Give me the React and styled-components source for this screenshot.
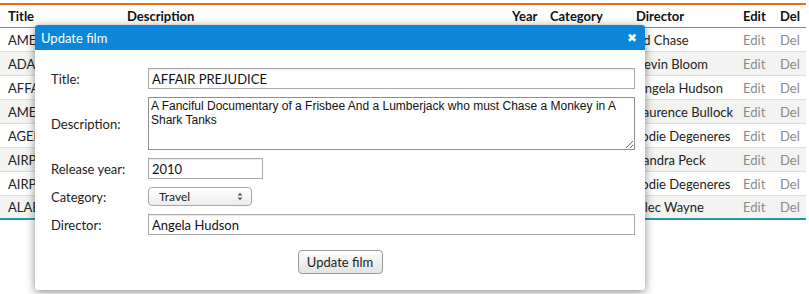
import React from "react"
import styled, { createGlobalStyle } from "styled-components"

const GlobalStyle = createGlobalStyle`
    html, body {
        margin: 0;
        padding: 0;
        background: #ffffff;
    }
    body {
        font-family: Lato, "Open Sans", sans-serif;
        font-size: 13px;
        color: #222222;
    }
    * { box-sizing: border-box; }
`

const films = [
    { title: "AMERICAN CIRCUS", description: "A Insightful Drama of a Girl And a Astronaut who must Face a Database Administrator in A Shark Tank", year: 2006, category: "Action", director: "Ed Chase" },
    { title: "ADAPTATION HOLES", description: "A Astounding Reflection of a Lumberjack And a Car who must Sink a Lumberjack in A Baloon Factory", year: 2006, category: "Documentary", director: "Kevin Bloom" },
    { title: "AFFAIR PREJUDICE", description: "A Fanciful Documentary of a Frisbee And a Lumberjack who must Chase a Monkey in A Shark Tanks", year: 2010, category: "Travel", director: "Angela Hudson" },
    { title: "AMELIE HELLFIGHTERS", description: "A Boring Drama of a Woman And a Squirrel who must Conquer a Student in A Baloon", year: 2006, category: "Music", director: "Laurence Bullock" },
    { title: "AGENT TRUMAN", description: "A Intrepid Panorama of a Robot And a Boy who must Escape a Sumo Wrestler in Ancient China", year: 2006, category: "Foreign", director: "Jodie Degeneres" },
    { title: "AIRPLANE SIERRA", description: "A Touching Saga of a Hunter And a Butler who must Discover a Butler in A Jet Boat", year: 2006, category: "Comedy", director: "Sandra Peck" },
    { title: "AIRPORT POLLOCK", description: "A Epic Tale of a Moose And a Girl who must Confront a Monkey in Ancient India", year: 2006, category: "Horror", director: "Jodie Degeneres" },
    { title: "ALABAMA DEVIL", description: "A Thoughtful Panorama of a Database Administrator And a Mad Scientist who must Outgun a Mad Scientist in A Jet Boat", year: 2006, category: "Horror", director: "Alec Wayne" },
]

const columns = [
    { label: "Title", width: 119 },
    { label: "Description", width: 385 },
    { label: "Year", width: 38 },
    { label: "Category", width: 86 },
    { label: "Director", width: 107 },
    { label: "Edit", width: 37 },
    { label: "Del", width: 34 },
]

export default function App(){
    return(
        <SCPage>
            <GlobalStyle />
            <SCTable>
                <colgroup>
                    {columns.map(c => <col key={c.label} style={{ width: c.width }} />)}
                </colgroup>
                <thead>
                    <tr>
                        {columns.map(c => <SCHeadCell key={c.label}>{c.label}</SCHeadCell>)}
                    </tr>
                </thead>
                <tbody>
                    {films.map((f, i) => (
                        <SCRow key={i} $striped={i % 2 === 1}>
                            <SCCell>{f.title}</SCCell>
                            <SCCell>{f.description}</SCCell>
                            <SCCell>{f.year}</SCCell>
                            <SCCell>{f.category}</SCCell>
                            <SCCell>{f.director}</SCCell>
                            <SCCell $muted>Edit</SCCell>
                            <SCCell $muted>Del</SCCell>
                        </SCRow>
                    ))}
                </tbody>
            </SCTable>

            <SCModal>
                <SCModalHeader>
                    <span>Update film</span>
                    <SCClose>✖</SCClose>
                </SCModalHeader>
                <SCForm>
                    <SCLabel>Title:</SCLabel>
                    <SCInput defaultValue="AFFAIR PREJUDICE" />

                    <SCLabel>Description:</SCLabel>
                    <SCTextarea defaultValue="A Fanciful Documentary of a Frisbee And a Lumberjack who must Chase a Monkey in A Shark Tanks" />

                    <SCLabel>Release year:</SCLabel>
                    <SCInput $short defaultValue="2010" />

                    <SCLabel>Category:</SCLabel>
                    <SCSelectWrap>
                        <SCSelect defaultValue="Travel">
                            <option>Action</option>
                            <option>Documentary</option>
                            <option>Travel</option>
                        </SCSelect>
                        <SCArrows width="6" height="9" viewBox="0 0 6 9">
                            <path d="M0.5 3.5 L3 0.8 L5.5 3.5 Z M0.5 5.5 L3 8.2 L5.5 5.5 Z" fill="#555" />
                        </SCArrows>
                    </SCSelectWrap>

                    <SCLabel>Director:</SCLabel>
                    <SCInput defaultValue="Angela Hudson" />
                </SCForm>
                <SCFooter>
                    <SCButton>Update film</SCButton>
                </SCFooter>
            </SCModal>
        </SCPage>
    )
}

const SCPage = styled.div`
    position: relative;
    width: 809px;
    height: 294px;
    padding-top: 3px;
    overflow: hidden;
`

const SCTable = styled.table`
    width: 806px;
    border-collapse: collapse;
    table-layout: fixed;
    border-top: 2px solid #f26b0c;
    border-bottom: 2px solid #1e9ba3;
`

const SCHeadCell = styled.th`
    text-align: left;
    font-weight: 700;
    font-size: 13px;
    color: #111;
    height: 23px;
    padding: 0 0 0 8px;
    border-bottom: 1px solid #f26b0c;
    white-space: nowrap;
    overflow: hidden;
`

const SCRow = styled.tr`
    background: ${p => p.$striped ? "#f3f3f1" : "#ffffff"};
    border-top: 1px solid #dcdcdc;
`

const SCCell = styled.td`
    height: 24px;
    padding: 1px 0 0 8px;
    white-space: nowrap;
    overflow: hidden;
    font-size: 13px;
    color: ${p => p.$muted ? "#8a8a8a" : "#222"};
`

const SCModal = styled.div`
    position: absolute;
    left: 35px;
    top: 25px;
    width: 610px;
    height: 265px;
    background: #ffffff;
    border-radius: 3px;
    box-shadow: 0 2px 10px rgba(0, 0, 0, 0.45);
    display: flex;
    flex-direction: column;
`

const SCModalHeader = styled.div`
    height: 25px;
    background: #0b86d8;
    color: #ffffff;
    display: flex;
    align-items: center;
    justify-content: space-between;
    padding: 0 8px 0 6px;
    border-radius: 3px 3px 0 0;
    font-size: 13px;
`

const SCClose = styled.span`
    font-size: 12px;
    font-weight: 700;
    font-family: "DejaVu Sans", sans-serif;
`

const SCForm = styled.div`
    display: grid;
    grid-template-columns: 97px 1fr;
    row-gap: 8px;
    align-items: center;
    padding: 18px 10px 0 16px;
    font-size: 13px;
`

const SCLabel = styled.label`
    color: #222;
`

const SCInput = styled.input`
    font-family: Lato, "Open Sans", sans-serif;
    font-size: 13px;
    color: #111;
    height: 21px;
    width: ${p => p.$short ? "115px" : "100%"};
    border: 1px solid #a9a9a9;
    box-shadow: inset 0 1px 1px rgba(0,0,0,0.08);
    padding: 0 3px;
    outline: none;
`

const SCTextarea = styled.textarea`
    font-family: "Liberation Sans", Arial, sans-serif;
    font-size: 12px;
    line-height: 14px;
    color: #111;
    height: 53px;
    width: 100%;
    border: 1px solid #8f8f8f;
    padding: 1px 2px;
    resize: both;
    outline: none;
`

const SCSelectWrap = styled.div`
    position: relative;
    width: 104px;
    height: 19px;
`

const SCSelect = styled.select`
    appearance: none;
    width: 100%;
    height: 100%;
    font-family: Lato, "Open Sans", sans-serif;
    font-size: 12px;
    color: #222;
    padding: 0 0 0 10px;
    border: 1px solid #a6a6a6;
    border-radius: 4px;
    background: linear-gradient(#ffffff, #ececec);
    outline: none;
`

const SCArrows = styled.svg`
    position: absolute;
    right: 9px;
    top: 5px;
    pointer-events: none;
`

const SCFooter = styled.div`
    display: flex;
    justify-content: center;
    padding-top: 15px;
`

const SCButton = styled.button`
    font-family: Lato, "Open Sans", sans-serif;
    font-size: 13px;
    color: #222;
    width: 85px;
    height: 24px;
    border: 1px solid #9a9a9a;
    border-radius: 4px;
    background: linear-gradient(#fdfdfd, #e3e3e3);
    padding: 0;
`
